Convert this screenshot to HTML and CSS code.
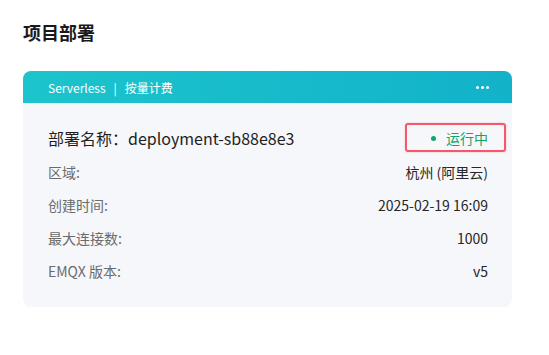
FILE: index.html
```html
<!DOCTYPE html>
<html lang="zh-CN">
<head>
  <meta charset="UTF-8">
  <meta name="viewport" content="width=device-width, initial-scale=1.0">
  <title>项目部署</title>
  <link rel="stylesheet" href="styles.css">
</head>
<body>
  <div class="page">
    <h2 class="page-title">项目部署</h2>

    <!-- Deployment card -->
    <div class="deploy-card">
      <div class="card-header">
        <div class="plan">
          <span>Serverless</span>
          <span class="sep">|</span>
          <span>按量计费</span>
        </div>
        <div class="more"><i></i><i></i><i></i></div>
      </div>

      <div class="card-body">
        <div class="name-row">
          <div class="deploy-name">部署名称：deployment-sb88e8e3</div>
          <div class="status">
            <span class="dot"></span>
            <span>运行中</span>
          </div>
        </div>

        <div class="info-row">
          <span class="label">区域:</span>
          <span class="value">杭州 (阿里云)</span>
        </div>
        <div class="info-row">
          <span class="label">创建时间:</span>
          <span class="value">2025-02-19 16:09</span>
        </div>
        <div class="info-row">
          <span class="label">最大连接数:</span>
          <span class="value">1000</span>
        </div>
        <div class="info-row">
          <span class="label">EMQX 版本:</span>
          <span class="value">v5</span>
        </div>
      </div>
    </div>
  </div>
</body>
</html>
```

FILE: styles.css
```css
/* Reset */
body, html {
  margin: 0;
  padding: 0;
  background: #fff;
  font-family: "Noto Sans CJK SC", "Noto Sans", sans-serif;
  color: #262626;
}

.page {
  padding: 19px 37px 0 23px;
}

.page-title {
  margin: 0 0 26px;
  font-size: 18px;
  font-weight: bold;
  line-height: 26px;
  color: #1a1a1a;
}

/* Card */
.deploy-card {
  border-radius: 8px;
  overflow: hidden;
  background: #f5f7fb;
}

.card-header {
  display: flex;
  align-items: center;
  justify-content: space-between;
  height: 32px;
  padding: 0 23px 0 25px;
  background: linear-gradient(90deg, #1cc4cc 0%, #12b2c9 100%);
  color: #fff;
  font-size: 12px;
}

.plan {
  display: flex;
  align-items: center;
  gap: 8px;
}

.more {
  display: flex;
  gap: 2px;
}

.more i {
  width: 3px;
  height: 3px;
  border-radius: 50%;
  background: #fff;
}

.card-body {
  padding: 18px 24px 20px 25px;
}

.name-row {
  display: flex;
  align-items: center;
  justify-content: space-between;
  height: 34px;
}

.deploy-name {
  font-size: 16px;
  color: #1f1f1f;
}

.status {
  position: relative;
  display: flex;
  align-items: center;
  gap: 10px;
  font-size: 14px;
  color: #14a46b;
}

/* highlight frame over the status */
.status::after {
  content: "";
  position: absolute;
  top: -5px;
  bottom: -4px;
  left: -26px;
  right: -18px;
  border: 2px solid #f4586a;
  border-radius: 3px;
  box-shadow: 0 0 2px rgba(244, 88, 106, 0.4);
}

.dot {
  width: 5px;
  height: 5px;
  border-radius: 50%;
  background: #14a46b;
}

.info-row {
  display: flex;
  justify-content: space-between;
  align-items: center;
  height: 33px;
  font-size: 14px;
}

.label {
  color: #6b6b6b;
}

.value {
  color: #262626;
}
```
